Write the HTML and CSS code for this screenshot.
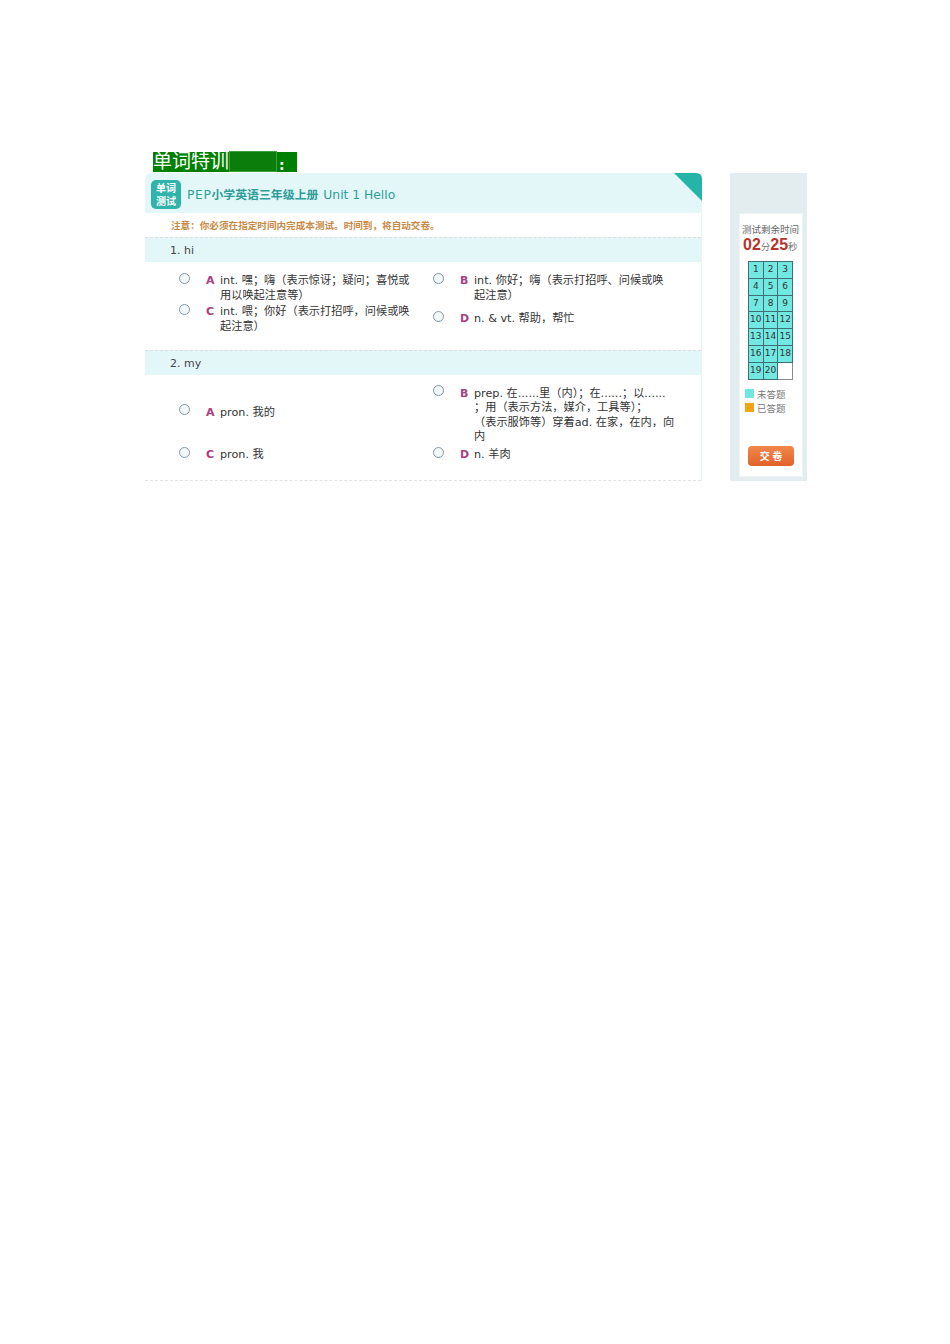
FILE: index.html
```html
<!DOCTYPE html>
<html lang="zh">
<head>
<meta charset="utf-8">
<title>单词特训</title>
<link rel="stylesheet" href="styles.css">
</head>
<body>
<div class="page">
  <h1 class="title"><span class="title-text">单词特训</span><span class="title-gap"></span><span class="title-colon">:</span></h1>
  <div class="columns">
    <main class="panel">
      <header class="panel-head">
        <div class="badge">单词<br>测试</div>
        <div class="panel-title"><span class="pep">PEP</span><span class="cjk-bold">小学英语三年级上册</span> Unit 1 Hello</div>
        <svg class="corner" viewBox="0 0 28 28" aria-hidden="true"><path d="M0 0H22Q28 0 28 6V28Z" fill="#25b5a8"/></svg>
      </header>
      <p class="notice">注意：你必须在指定时间内完成本测试。时间到，将自动交卷。</p>

      <section class="question">
        <h2 class="q-head">1. hi</h2>
        <div class="options q1">
          <div class="opt"><span class="radio"></span><b class="key">A</b><span class="txt">int. 嘿；嗨（表示惊讶；疑问；喜悦或<br>用以唤起注意等）</span></div>
          <div class="opt"><span class="radio"></span><b class="key">B</b><span class="txt">int. 你好；嗨（表示打招呼、问候或唤<br>起注意）</span></div>
          <div class="opt"><span class="radio"></span><b class="key">C</b><span class="txt">int. 喂；你好（表示打招呼，问候或唤<br>起注意）</span></div>
          <div class="opt"><span class="radio"></span><b class="key">D</b><span class="txt">n. &amp; vt. 帮助，帮忙</span></div>
        </div>
      </section>

      <section class="question">
        <h2 class="q-head">2. my</h2>
        <div class="options q2">
          <div class="opt"><span class="radio"></span><b class="key">A</b><span class="txt">pron. 我的</span></div>
          <div class="opt"><span class="radio"></span><b class="key">B</b><span class="txt">prep. 在......里（内）；在......；以......<br>；用（表示方法，媒介，工具等）；<br>（表示服饰等）穿着ad. 在家，在内，向<br>内</span></div>
          <div class="opt"><span class="radio"></span><b class="key">C</b><span class="txt">pron. 我</span></div>
          <div class="opt"><span class="radio"></span><b class="key">D</b><span class="txt">n. 羊肉</span></div>
        </div>
      </section>
    </main>

    <aside class="side">
      <div class="side-card">
        <div class="timer-label">测试剩余时间</div>
        <div class="timer"><b>02</b><span>分</span><b>25</b><span>秒</span></div>
        <div class="grid">
          <span>1</span><span>2</span><span>3</span>
          <span>4</span><span>5</span><span>6</span>
          <span>7</span><span>8</span><span>9</span>
          <span>10</span><span>11</span><span>12</span>
          <span>13</span><span>14</span><span>15</span>
          <span>16</span><span>17</span><span>18</span>
          <span>19</span><span>20</span><span class="blank"></span>
        </div>
        <div class="legend"><i class="sw todo"></i>未答题</div>
        <div class="legend"><i class="sw done"></i>已答题</div>
        <button class="submit" type="button">交 卷</button>
      </div>
    </aside>
  </div>
</div>
</body>
</html>
```
FILE: styles.css
```css
* { box-sizing: border-box; }
html, body { margin: 0; padding: 0; background: #fff; }
body { font-family: "DejaVu Sans", "Noto Sans CJK SC", sans-serif; color: #333; }
.page { padding: 151px 0 0 145px; width: 950px; height: 1344px; overflow: hidden; }

.title { margin: 0 0 1px 8px; height: 21px; display: flex; align-items: stretch; font-size: 19px; font-weight: 400; line-height: 16px; font-family: "Noto Sans CJK SC", sans-serif; }
.title-text { background: #008000; color: #fff; width: 76px; margin-top: 1px; white-space: nowrap; }
.title-gap { background: #0a7d0a; width: 48px; border: 1px solid #3f9f3f; }
.title-colon { background: #008000; color: #fff; width: 20px; margin-top: 1px; padding: 6px 0 0 2px; font-weight: 700; font-size: 14px; line-height: 14px; font-family: "DejaVu Sans", sans-serif; }

.columns { display: flex; align-items: flex-start; gap: 28px; }

.panel { width: 557px; height: 308px; border-right: 1px solid #e6f5f6; }
.panel-head { position: relative; height: 40px; background: #e4f7f8; border-radius: 6px 6px 0 0; padding: 7px 0 0 6px; display: flex; align-items: flex-start; gap: 6px; }
.badge { width: 30px; height: 29px; background: #2fb3aa; border-radius: 5px; color: #fff; font-size: 10px; line-height: 12.5px; font-weight: 700; text-align: center; padding-top: 2px; font-family: "Noto Sans CJK SC", sans-serif; }
.panel-title { font-size: 12.3px; line-height: 16px; margin-top: 6px; color: #2f9d99; white-space: nowrap; font-family: "DejaVu Sans", "Noto Sans CJK SC", sans-serif; }
.pep { letter-spacing: 0.6px; }
.cjk-bold { font-family: "Noto Sans CJK SC", sans-serif; font-weight: 700; font-size: 11.9px; margin-right: 1px; }
.corner { position: absolute; top: 0; right: -1px; width: 28px; height: 28px; display: block; }
.notice { margin: 0; height: 24px; padding: 5px 0 0 26px; font-size: 9.6px; line-height: 14px; color: #c98a45; font-weight: 700; font-family: "Noto Sans CJK SC", sans-serif; white-space: nowrap; }

.q-head { margin: 0; height: 25px; background: #e4f7f8; border-top: 1px dashed #dcdcdc; font-size: 11px; font-weight: 400; line-height: 25px; padding-left: 25px; color: #444; }
.options { display: grid; grid-template-columns: 254px 254px; padding-left: 35px; font-size: 11.2px; line-height: 14.5px; color: #333; }
.q1 { height: 88px; padding-top: 11px; grid-template-rows: 31px 31px; }
.q2 { height: 106px; padding-top: 12px; border-bottom: 1px dashed #e2e2e2; grid-template-rows: 57px 23px; }
.q2 .opt:first-child { margin-bottom: 5px; }
.opt { display: flex; align-items: flex-start; align-self: center; }
.radio { width: 11px; height: 11px; margin: -1.5px 15px 0 -1px; border-radius: 50%; background: #f4f7f8; border: 1.5px solid #8199a8; flex: none; }
.key { width: 15px; padding-left: 1px; flex: none; font-size: 11px; color: #a8407f; font-weight: 700; }
.txt { white-space: nowrap; color: #333; }

.side { width: 77px; height: 308px; background: #e3edef; padding: 40px 4px 4px 9px; }
.side-card { height: 264px; background: #fff; border: 1px solid #eef3f4; padding-top: 8px; display: flex; flex-direction: column; align-items: flex-start; }
.timer-label { font-size: 9.5px; line-height: 14px; color: #666; padding-left: 2px; white-space: nowrap; font-family: "Noto Sans CJK SC", sans-serif; }
.timer { display: flex; align-items: baseline; line-height: 18px; padding-left: 3px; white-space: nowrap; font-family: "Liberation Sans", sans-serif; }
.timer b { font-size: 16px; font-weight: 700; color: #b8332d; }
.timer span { font-size: 9.5px; color: #777; font-family: "Noto Sans CJK SC", sans-serif; }

.grid { display: grid; grid-template-columns: repeat(3, 14.7px); grid-auto-rows: 16.8px; margin: 6px 0 0 8px; border-top: 1px solid #3f6f75; border-left: 1px solid #3f6f75; }
.grid span { background: #72e8e2; border-right: 1px solid #3f6f75; border-bottom: 1px solid #3f6f75; font-size: 9px; line-height: 15.5px; text-align: center; color: #333; }
.grid .blank { background: #fff; border-color: #8a8a8a; }

.legend { display: flex; align-items: center; font-size: 9.5px; line-height: 14px; color: #777; padding-left: 5px; white-space: nowrap; font-family: "Noto Sans CJK SC", sans-serif; }
.grid + .legend { margin-top: 7px; }
.sw { width: 9px; height: 9px; margin-right: 3px; flex: none; }
.todo { background: #6fe6e2; }
.done { background: #f0a21a; }

.submit { margin: 31px 0 0 8px; width: 46px; height: 20px; border: 0; border-radius: 4px; background: linear-gradient(#f2884a, #e0622a); color: #fff; font-size: 10px; font-weight: 700; padding: 0; font-family: "Noto Sans CJK SC", sans-serif; }
```
